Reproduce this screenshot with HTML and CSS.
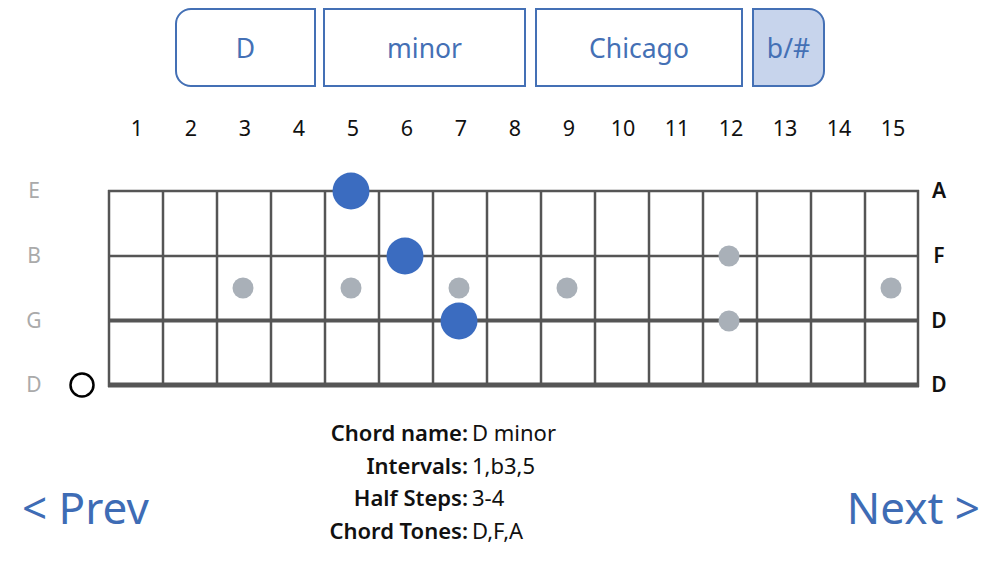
FILE: index.html
```html
<!DOCTYPE html>
<html>
<head>
<meta charset="utf-8">
<link rel="stylesheet" href="styles.css">
</head>
<body>
<div class="page">
  <div class="selectors">
    <div class="sel sel-first">D</div>
    <div class="sel sel-quality">minor</div>
    <div class="sel sel-voicing">Chicago</div>
    <div class="sel sel-last active">b/#</div>
  </div>
  <svg class="board" width="1000" height="310" viewBox="0 0 1000 310">
    <g class="fretnums">
      <text x="137" y="27">1</text><text x="191" y="27">2</text><text x="245" y="27">3</text>
      <text x="299" y="27">4</text><text x="353" y="27">5</text><text x="407" y="27">6</text>
      <text x="461" y="27">7</text><text x="515" y="27">8</text><text x="569" y="27">9</text>
      <text x="623" y="27">10</text><text x="677" y="27">11</text><text x="731" y="27">12</text>
      <text x="785" y="27">13</text><text x="839" y="27">14</text><text x="893" y="27">15</text>
    </g>
    <g class="tuning">
      <text x="34" y="90">E</text><text x="34" y="155">B</text>
      <text x="34" y="220">G</text><text x="34" y="284">D</text>
    </g>
    <g class="notes-right">
      <text x="939" y="90">A</text><text x="939" y="155">F</text>
      <text x="939" y="220">D</text><text x="939" y="284">D</text>
    </g>
    <g class="frets">
      <line x1="109" y1="90" x2="109" y2="287"/><line x1="163" y1="90" x2="163" y2="287"/>
      <line x1="217" y1="90" x2="217" y2="287"/><line x1="271" y1="90" x2="271" y2="287"/>
      <line x1="325" y1="90" x2="325" y2="287"/><line x1="379" y1="90" x2="379" y2="287"/>
      <line x1="433" y1="90" x2="433" y2="287"/><line x1="487" y1="90" x2="487" y2="287"/>
      <line x1="541" y1="90" x2="541" y2="287"/><line x1="595" y1="90" x2="595" y2="287"/>
      <line x1="649" y1="90" x2="649" y2="287"/><line x1="703" y1="90" x2="703" y2="287"/>
      <line x1="757" y1="90" x2="757" y2="287"/><line x1="811" y1="90" x2="811" y2="287"/>
      <line x1="865" y1="90" x2="865" y2="287"/><line x1="918" y1="90" x2="918" y2="287"/>
    </g>
    <g class="strings">
      <line class="thin" x1="108" y1="91" x2="919" y2="91"/>
      <line class="thin" x1="108" y1="156" x2="919" y2="156"/>
      <line class="mid" x1="108" y1="220.5" x2="919" y2="220.5"/>
      <line class="thick" x1="108" y1="285" x2="919" y2="285"/>
    </g>
    <g class="markers">
      <circle cx="243" cy="188" r="10.5"/><circle cx="351" cy="188" r="10.5"/>
      <circle cx="459" cy="188" r="10.5"/><circle cx="567" cy="188" r="10.5"/>
      <circle cx="729" cy="156" r="10.5"/><circle cx="729" cy="221" r="10.5"/>
      <circle cx="891" cy="188" r="10.5"/>
    </g>
    <circle class="open" cx="82" cy="285" r="11.5"/>
    <g class="tones">
      <circle cx="351" cy="91" r="18.5"/>
      <circle cx="405" cy="156" r="18.5"/>
      <circle cx="459" cy="221" r="18.5"/>
    </g>
  </svg>
  <div class="bottom">
    <div class="nav prev">&lt; Prev</div>
    <div class="info">
      <div class="lbl">Chord name:</div><div class="val">D minor</div>
      <div class="lbl">Intervals:</div><div class="val">1,b3,5</div>
      <div class="lbl">Half Steps:</div><div class="val">3-4</div>
      <div class="lbl">Chord Tones:</div><div class="val">D,F,A</div>
    </div>
    <div class="nav next">Next &gt;</div>
  </div>
</div>
</body>
</html>
```
FILE: styles.css
```css
html, body {
  margin: 0;
  padding: 0;
  background: #ffffff;
}
body {
  font-family: "Noto Sans", "Open Sans", sans-serif;
  width: 1000px;
  height: 563px;
  overflow: hidden;
}
.page {
  display: flex;
  flex-direction: column;
}
.selectors {
  display: flex;
  padding: 8px 0 0 175px;
  height: 79px;
}
.sel {
  box-sizing: border-box;
  height: 79px;
  border: 2px solid #4470b5;
  color: #4470b5;
  font-size: 26.5px;
  display: flex;
  align-items: center;
  justify-content: center;
  background: #fff;
}
.sel-first {
  width: 141px;
  border-radius: 16px 0 0 16px;
}
.sel-quality {
  width: 203px;
  margin-left: 7px;
}
.sel-voicing {
  width: 208px;
  margin-left: 9px;
}
.sel-last {
  width: 73px;
  margin-left: 9px;
  border-radius: 0 16px 16px 0;
}
.sel.active {
  background: #c7d4ec;
}
.board {
  display: block;
  margin-top: 13px;
}
.board text {
  dominant-baseline: central;
  text-anchor: middle;
}
.fretnums text {
  font-size: 21.5px;
  fill: #111;
}
.tuning text {
  font-size: 21px;
  fill: #aaaaaa;
}
.notes-right text {
  font-size: 21px;
  font-weight: 600;
  fill: #111;
}
.frets line {
  stroke: #555;
  stroke-width: 2.5;
}
.strings line {
  stroke: #555;
}
.strings .thin { stroke-width: 2.5; }
.strings .mid { stroke-width: 4; }
.strings .thick { stroke-width: 5; }
.markers circle {
  fill: #a9b0b8;
}
.tones circle {
  fill: #3b6cc0;
}
.open {
  fill: none;
  stroke: #000;
  stroke-width: 2.5;
}
.bottom {
  display: grid;
  grid-template-columns: 296px auto 1fr;
  padding-left: 22px;
  margin-top: 6px;
}
.nav {
  font-size: 44px;
  line-height: 52px;
  color: #3e6cb5;
  margin-top: 65px;
}
.next {
  justify-self: end;
  margin-right: 20px;
}
.info {
  display: grid;
  grid-template-columns: 150px auto;
  column-gap: 4px;
  font-size: 22px;
  line-height: 32.7px;
  color: #111;
}
.lbl {
  font-weight: 600;
  text-align: right;
}
```
